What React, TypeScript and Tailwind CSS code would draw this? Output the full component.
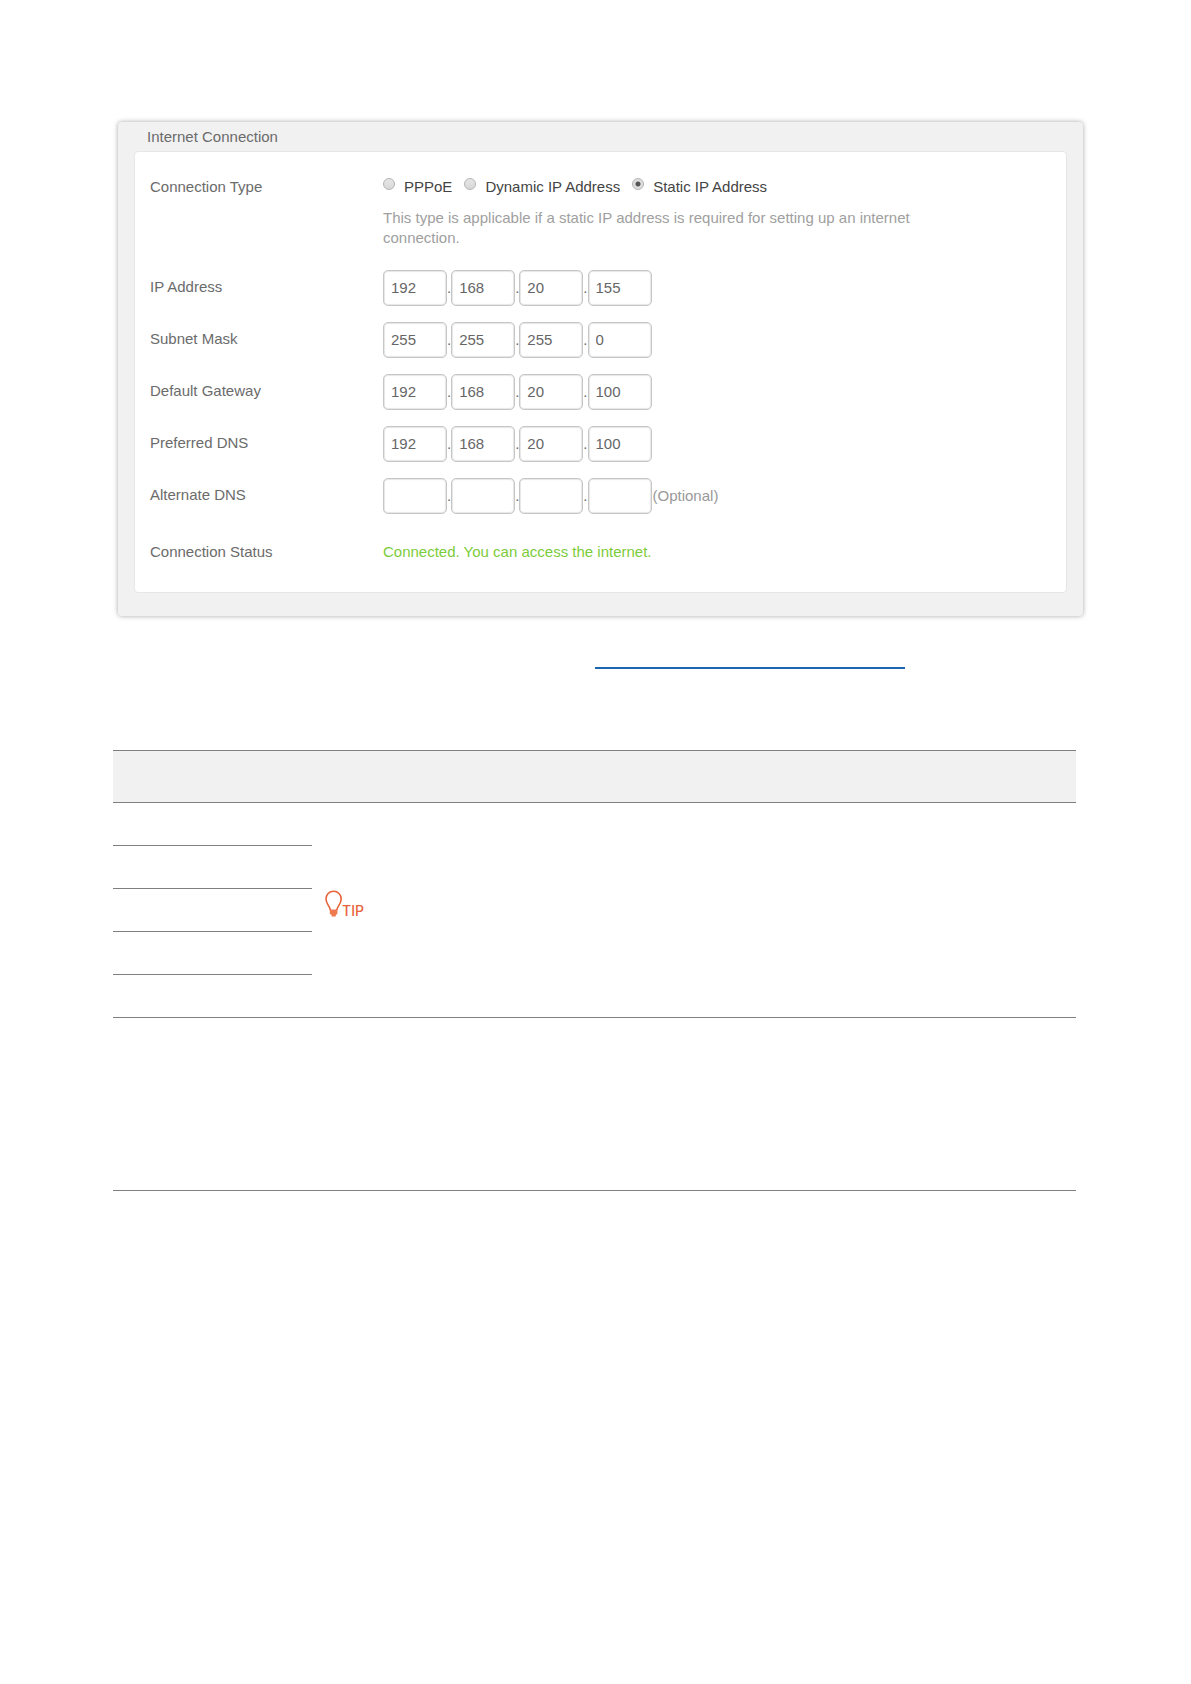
import { useState } from 'react';

interface AddressField {
  id: string;
  label: string;
  octets: string[];
  note?: string;
}

const connectionTypes = ['PPPoE', 'Dynamic IP Address', 'Static IP Address'];

const addressFields: AddressField[] = [
  { id: 'ip', label: 'IP Address', octets: ['192', '168', '20', '155'] },
  { id: 'mask', label: 'Subnet Mask', octets: ['255', '255', '255', '0'] },
  { id: 'gateway', label: 'Default Gateway', octets: ['192', '168', '20', '100'] },
  { id: 'dns1', label: 'Preferred DNS', octets: ['192', '168', '20', '100'] },
  { id: 'dns2', label: 'Alternate DNS', octets: ['', '', '', ''], note: '(Optional)' },
];

const parameterRows = [1, 2, 3, 4, 5];

function AddressRow({ field }: { field: AddressField }) {
  return (
    <div className="flex">
      <label htmlFor={`${field.id}-0`} className="w-[233px] shrink-0 pt-[7px]">
        {field.label}
      </label>
      <div className="flex items-center">
        {field.octets.map((octet, i) => (
          <div key={i} className="flex items-center">
            {i > 0 && <span>.</span>}
            <input
              id={`${field.id}-${i}`}
              type="text"
              defaultValue={octet}
              aria-label={`${field.label} ${i + 1}`}
              className="h-9 w-16 rounded-[5px] border border-[#c6c6c6] bg-white px-[7px] pb-0.5 text-[15px] leading-5 text-[#666] shadow-[inset_0_0_1px_1px_#e6e6e6] outline-none"
            />
          </div>
        ))}
        {field.note && <span className="ml-px text-[#999]">{field.note}</span>}
      </div>
    </div>
  );
}

function ConnectionPanel() {
  const [type, setType] = useState('Static IP Address');

  return (
    <section className="mr-[108px] ml-[118px] rounded-sm bg-[#f1f1f1] px-4 pt-[5px] pb-[23px] text-[15px] leading-5 text-[#6b6b6b] shadow-[0_0_5px_rgba(0,0,0,0.35)]">
      <h2 className="mb-1 pl-[13px]">Internet Connection</h2>
      <div className="rounded border border-[#e6e6e6] bg-white pt-[25px] pr-4 pb-[30px] pl-[15px]">
        <div className="mb-[22px] flex">
          <span className="w-[233px] shrink-0">Connection Type</span>
          <div>
            <div className="mb-[11px] flex gap-3" role="radiogroup" aria-label="Connection Type">
              {connectionTypes.map((name) => (
                <label key={name} className="flex gap-[9px] text-[#444]">
                  <input
                    type="radio"
                    name="connection-type"
                    checked={type === name}
                    onChange={() => setType(name)}
                    className="mt-px size-3 appearance-none rounded-full border border-[#b4b4b4] bg-linear-to-b from-[#e6e6e6] to-[#d8d8d8] checked:bg-[radial-gradient(circle,#555_2px,#dedede_3px)]"
                  />
                  {name}
                </label>
              ))}
            </div>
            <p className="max-w-[540px] text-[#a0a0a0]">
              This type is applicable if a static IP address is required for setting up an internet connection.
            </p>
          </div>
        </div>

        <div className="mb-7 flex flex-col gap-4">
          {addressFields.map((field) => (
            <AddressRow key={field.id} field={field} />
          ))}
        </div>

        <div className="flex">
          <span className="w-[233px] shrink-0">Connection Status</span>
          <span className="text-[#7ccc3a]">Connected. You can access the internet.</span>
        </div>
      </div>
    </section>
  );
}

function Tip() {
  return (
    <div className="flex items-end text-sm leading-3 text-[#e8633a]">
      <svg width="17" height="27" viewBox="0 0 17 27" fill="none" aria-hidden="true">
        <path
          d="M5.4 20.2C5 16 1 14 1 9C1 4.6 4.2 1.2 8.6 1.2C13 1.2 16.2 4.6 16.2 9C16.2 14 12.2 16 11.8 20.2"
          stroke="currentColor"
          strokeWidth="1.6"
        />
        <path d="M4.8 19.6H12.4V23.8L10.8 25V26.4H6.6V25L4.8 23.8Z" fill="#f07a50" />
      </svg>
      <span className="font-['Inter',sans-serif] font-medium">TIP</span>
    </div>
  );
}

function ParameterTable() {
  return (
    <div className="mr-[115px] ml-[113px]">
      <table className="w-full table-fixed border-separate border-spacing-0">
        <colgroup>
          <col className="w-[199px]" />
          <col />
        </colgroup>
        <thead>
          <tr className="h-[53px] bg-[#f1f1f1]">
            <th className="border-y border-[#7f7f7f]" />
            <th className="border-y border-[#7f7f7f]" />
          </tr>
        </thead>
        <tbody>
          {parameterRows.map((row) => (
            <tr key={row} className="h-[43px]">
              <td className="border-b border-[#7f7f7f]" />
              {row === 1 && (
                <td rowSpan={5} className="border-b border-[#7f7f7f] pt-[87px] pl-[13px] align-top">
                  <Tip />
                </td>
              )}
            </tr>
          ))}
          <tr className="h-[173px]">
            <td className="border-b border-[#7f7f7f]" />
            <td className="border-b border-[#7f7f7f]" />
          </tr>
        </tbody>
      </table>
    </div>
  );
}

export default function App() {
  return (
    <main className="min-h-screen bg-white pt-[122px] font-['Liberation_Sans',Arial,sans-serif]">
      <ConnectionPanel />
      {/* link underline */}
      <div className="mt-[51px] mb-[81px] ml-[595px] h-0.5 w-[310px] bg-[#1c66b0]" />
      <ParameterTable />
    </main>
  );
}
